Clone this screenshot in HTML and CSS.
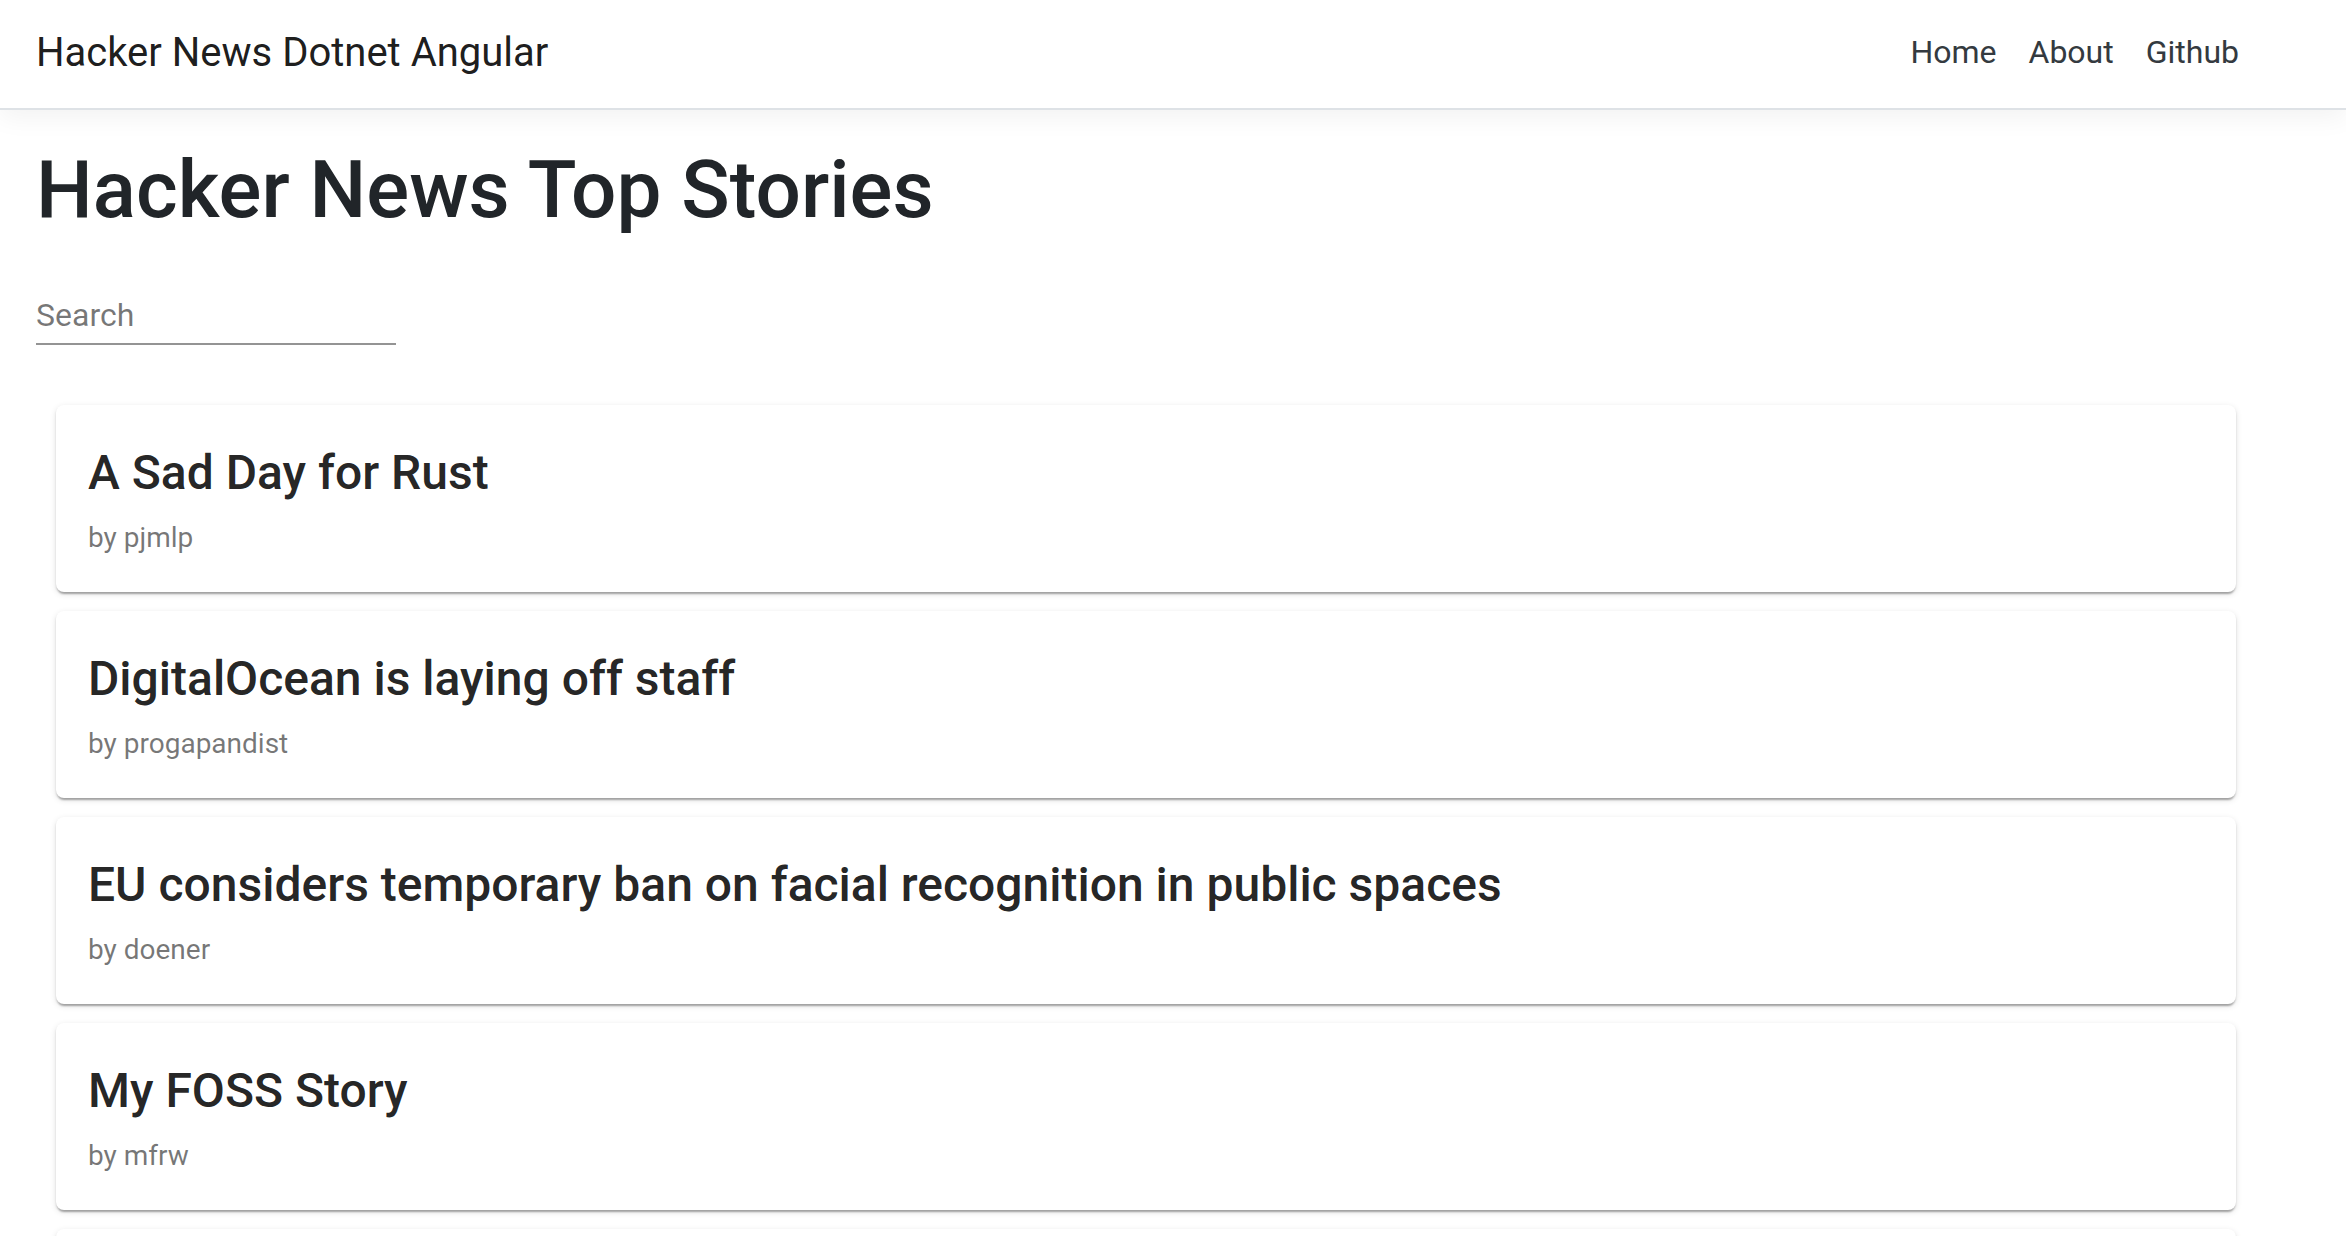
FILE: index.html
```html
<!DOCTYPE html>
<html lang="en">
<head>
<meta charset="utf-8">
<title>Hacker News Dotnet Angular</title>
<link rel="stylesheet" href="styles.css">
</head>
<body>
<header class="navbar">
  <a class="brand" href="#">Hacker News Dotnet Angular</a>
  <nav class="nav">
    <a class="nav-link" href="#">Home</a>
    <a class="nav-link" href="#">About</a>
    <a class="nav-link" href="#">Github</a>
  </nav>
</header>
<main class="container">
  <h1 class="page-title">Hacker News Top Stories</h1>
  <div class="search-field">
    <input class="search-input" type="text" placeholder="Search">
  </div>
  <div class="story-list">
    <article class="story-card">
      <h2 class="story-title">A Sad Day for Rust</h2>
      <div class="story-by">by pjmlp</div>
    </article>
    <article class="story-card">
      <h2 class="story-title">DigitalOcean is laying off staff</h2>
      <div class="story-by">by progapandist</div>
    </article>
    <article class="story-card">
      <h2 class="story-title">EU considers temporary ban on facial recognition in public spaces</h2>
      <div class="story-by">by doener</div>
    </article>
    <article class="story-card">
      <h2 class="story-title">My FOSS Story</h2>
      <div class="story-by">by mfrw</div>
    </article>
    <article class="story-card story-card-peek" aria-hidden="true"></article>
  </div>
</main>
</body>
</html>
```
FILE: styles.css
```css
* { box-sizing: border-box; }

html, body {
  margin: 0;
  padding: 0;
  background: #ffffff;
  font-family: Roboto, "Helvetica Neue", Arial, sans-serif;
  color: #212529;
}

.navbar {
  display: flex;
  align-items: center;
  justify-content: space-between;
  height: 110px;
  padding: 0 91px 2px 36px;
  background: #ffffff;
  border-bottom: 2px solid #dee2e6;
  box-shadow: 0 8px 24px rgba(0, 0, 0, 0.05);
  position: relative;
  z-index: 1;
}

.brand {
  font-size: 40px;
  line-height: 60px;
  color: rgba(0, 0, 0, 0.9);
  text-decoration: none;
  white-space: nowrap;
}

.nav {
  display: flex;
  align-items: center;
  margin-bottom: 3px;
}

.nav-link {
  font-size: 32px;
  line-height: 48px;
  padding: 0 16px;
  color: #343a40;
  text-decoration: none;
}

.container {
  padding: 32px 36px 0 36px;
}

.page-title {
  margin: 0;
  font-size: 80px;
  line-height: 96px;
  font-weight: 500;
  color: #212529;
}

.search-field {
  width: 360px;
  margin-top: 57px;
  border-bottom: 2px solid rgba(0, 0, 0, 0.42);
}

.search-input {
  display: block;
  width: 100%;
  border: none;
  outline: none;
  padding: 0 0 8px 0;
  margin: 0;
  font-family: inherit;
  font-size: 32px;
  line-height: 40px;
  color: rgba(0, 0, 0, 0.87);
  background: transparent;
}

.search-input::placeholder {
  color: rgba(0, 0, 0, 0.54);
}

.story-list {
  display: flex;
  flex-direction: column;
  gap: 19px;
  margin: 60px 74px 0 20px;
}

.story-card {
  background: #ffffff;
  border-radius: 8px;
  padding: 36px 32px 34px 32px;
  box-shadow: 0 4px 2px -2px rgba(0, 0, 0, 0.2),
              0 2px 2px 0 rgba(0, 0, 0, 0.14),
              0 2px 6px 0 rgba(0, 0, 0, 0.12);
}

.story-card-peek {
  height: 184px;
}

.story-title {
  margin: 0 0 13px 0;
  font-size: 48px;
  line-height: 64px;
  font-weight: 500;
  color: rgba(0, 0, 0, 0.87);
}

.story-by {
  font-size: 28px;
  line-height: 40px;
  color: rgba(0, 0, 0, 0.54);
}
```
